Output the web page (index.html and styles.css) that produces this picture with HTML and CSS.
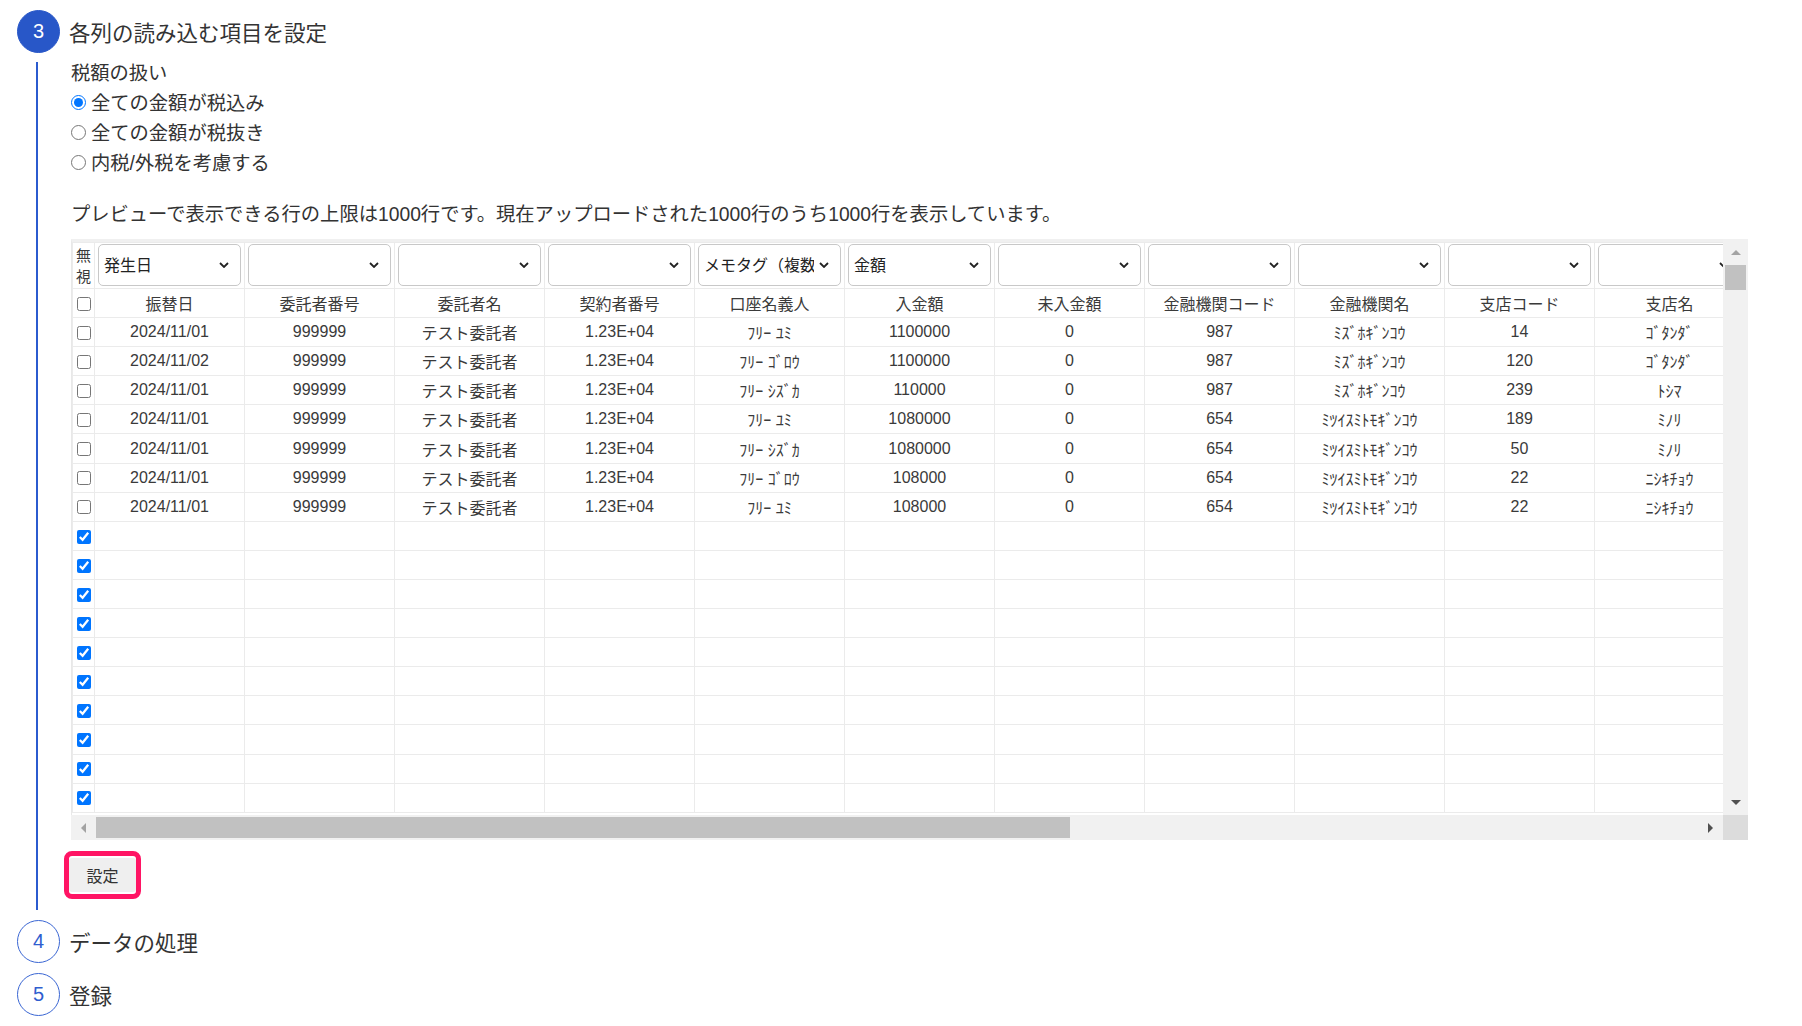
FILE: index.html
```html
<!DOCTYPE html>
<html lang="ja">
<head>
    <meta charset="UTF-8">
    <meta name="viewport" content="width=device-width, initial-scale=1.0">
    <title>取込設定</title>
    <link rel="stylesheet" href="styles.css">
</head>
<body>

    <section class="step is-active">
        <div class="step-head">
            <span class="step-num">3</span>
            <h2 class="step-title">各列の読み込む項目を設定</h2>
        </div>
        <div class="step-body">
            <p class="field-label">税額の扱い</p>
            <div class="radio-list">
                <label class="radio"><input type="radio" name="tax" checked>全ての金額が税込み</label>
                <label class="radio"><input type="radio" name="tax">全ての金額が税抜き</label>
                <label class="radio"><input type="radio" name="tax">内税/外税を考慮する</label>
            </div>

            <p class="preview-note">プレビューで表示できる行の上限は1000行です。現在アップロードされた1000行のうち1000行を表示しています。</p>

            <div class="preview">
                <div class="preview-scroll">
                    <table class="preview-table">
                        <colgroup>
                            <col class="col-check">
                            <col class="col-data"><col class="col-data"><col class="col-data"><col class="col-data">
                            <col class="col-data"><col class="col-data"><col class="col-data"><col class="col-data">
                            <col class="col-data"><col class="col-data"><col class="col-data">
                        </colgroup>
                        <thead>
                            <tr class="select-row">
                                <th class="ignore-head">無視</th>
                                <td><div class="col-select"><select><option>発生日</option></select><svg class="chevron" viewBox="0 0 10 6"><path d="M1 1l4 4 4-4"/></svg></div></td>
                                <td><div class="col-select"><select><option></option></select><svg class="chevron" viewBox="0 0 10 6"><path d="M1 1l4 4 4-4"/></svg></div></td>
                                <td><div class="col-select"><select><option></option></select><svg class="chevron" viewBox="0 0 10 6"><path d="M1 1l4 4 4-4"/></svg></div></td>
                                <td><div class="col-select"><select><option></option></select><svg class="chevron" viewBox="0 0 10 6"><path d="M1 1l4 4 4-4"/></svg></div></td>
                                <td><div class="col-select"><select><option>メモタグ（複数選択可）</option></select><svg class="chevron" viewBox="0 0 10 6"><path d="M1 1l4 4 4-4"/></svg></div></td>
                                <td><div class="col-select"><select><option>金額</option></select><svg class="chevron" viewBox="0 0 10 6"><path d="M1 1l4 4 4-4"/></svg></div></td>
                                <td><div class="col-select"><select><option></option></select><svg class="chevron" viewBox="0 0 10 6"><path d="M1 1l4 4 4-4"/></svg></div></td>
                                <td><div class="col-select"><select><option></option></select><svg class="chevron" viewBox="0 0 10 6"><path d="M1 1l4 4 4-4"/></svg></div></td>
                                <td><div class="col-select"><select><option></option></select><svg class="chevron" viewBox="0 0 10 6"><path d="M1 1l4 4 4-4"/></svg></div></td>
                                <td><div class="col-select"><select><option></option></select><svg class="chevron" viewBox="0 0 10 6"><path d="M1 1l4 4 4-4"/></svg></div></td>
                                <td><div class="col-select"><select><option></option></select><svg class="chevron" viewBox="0 0 10 6"><path d="M1 1l4 4 4-4"/></svg></div></td>
                            </tr>
                            <tr>
                                <th><input type="checkbox"></th>
                                <th>振替日</th><th>委託者番号</th><th>委託者名</th><th>契約者番号</th><th>口座名義人</th><th>入金額</th>
                                <th>未入金額</th><th>金融機関コード</th><th>金融機関名</th><th>支店コード</th><th>支店名</th>
                            </tr>
                        </thead>
                        <tbody>
                            <tr><td><input type="checkbox"></td><td>2024/11/01</td><td>999999</td><td>テスト委託者</td><td>1.23E+04</td><td>ﾌﾘｰ ﾕﾐ</td><td>1100000</td><td>0</td><td>987</td><td>ﾐｽﾞﾎｷﾞﾝｺｳ</td><td>14</td><td>ｺﾞﾀﾝﾀﾞ</td></tr>
                            <tr><td><input type="checkbox"></td><td>2024/11/02</td><td>999999</td><td>テスト委託者</td><td>1.23E+04</td><td>ﾌﾘｰ ｺﾞﾛｳ</td><td>1100000</td><td>0</td><td>987</td><td>ﾐｽﾞﾎｷﾞﾝｺｳ</td><td>120</td><td>ｺﾞﾀﾝﾀﾞ</td></tr>
                            <tr><td><input type="checkbox"></td><td>2024/11/01</td><td>999999</td><td>テスト委託者</td><td>1.23E+04</td><td>ﾌﾘｰ ｼｽﾞｶ</td><td>110000</td><td>0</td><td>987</td><td>ﾐｽﾞﾎｷﾞﾝｺｳ</td><td>239</td><td>ﾄｼﾏ</td></tr>
                            <tr><td><input type="checkbox"></td><td>2024/11/01</td><td>999999</td><td>テスト委託者</td><td>1.23E+04</td><td>ﾌﾘｰ ﾕﾐ</td><td>1080000</td><td>0</td><td>654</td><td>ﾐﾂｲｽﾐﾄﾓｷﾞﾝｺｳ</td><td>189</td><td>ﾐﾉﾘ</td></tr>
                            <tr><td><input type="checkbox"></td><td>2024/11/01</td><td>999999</td><td>テスト委託者</td><td>1.23E+04</td><td>ﾌﾘｰ ｼｽﾞｶ</td><td>1080000</td><td>0</td><td>654</td><td>ﾐﾂｲｽﾐﾄﾓｷﾞﾝｺｳ</td><td>50</td><td>ﾐﾉﾘ</td></tr>
                            <tr><td><input type="checkbox"></td><td>2024/11/01</td><td>999999</td><td>テスト委託者</td><td>1.23E+04</td><td>ﾌﾘｰ ｺﾞﾛｳ</td><td>108000</td><td>0</td><td>654</td><td>ﾐﾂｲｽﾐﾄﾓｷﾞﾝｺｳ</td><td>22</td><td>ﾆｼｷﾁｮｳ</td></tr>
                            <tr><td><input type="checkbox"></td><td>2024/11/01</td><td>999999</td><td>テスト委託者</td><td>1.23E+04</td><td>ﾌﾘｰ ﾕﾐ</td><td>108000</td><td>0</td><td>654</td><td>ﾐﾂｲｽﾐﾄﾓｷﾞﾝｺｳ</td><td>22</td><td>ﾆｼｷﾁｮｳ</td></tr>
                            <tr><td><input type="checkbox" checked></td><td></td><td></td><td></td><td></td><td></td><td></td><td></td><td></td><td></td><td></td><td></td></tr>
                            <tr><td><input type="checkbox" checked></td><td></td><td></td><td></td><td></td><td></td><td></td><td></td><td></td><td></td><td></td><td></td></tr>
                            <tr><td><input type="checkbox" checked></td><td></td><td></td><td></td><td></td><td></td><td></td><td></td><td></td><td></td><td></td><td></td></tr>
                            <tr><td><input type="checkbox" checked></td><td></td><td></td><td></td><td></td><td></td><td></td><td></td><td></td><td></td><td></td><td></td></tr>
                            <tr><td><input type="checkbox" checked></td><td></td><td></td><td></td><td></td><td></td><td></td><td></td><td></td><td></td><td></td><td></td></tr>
                            <tr><td><input type="checkbox" checked></td><td></td><td></td><td></td><td></td><td></td><td></td><td></td><td></td><td></td><td></td><td></td></tr>
                            <tr><td><input type="checkbox" checked></td><td></td><td></td><td></td><td></td><td></td><td></td><td></td><td></td><td></td><td></td><td></td></tr>
                            <tr><td><input type="checkbox" checked></td><td></td><td></td><td></td><td></td><td></td><td></td><td></td><td></td><td></td><td></td><td></td></tr>
                            <tr><td><input type="checkbox" checked></td><td></td><td></td><td></td><td></td><td></td><td></td><td></td><td></td><td></td><td></td><td></td></tr>
                            <tr><td><input type="checkbox" checked></td><td></td><td></td><td></td><td></td><td></td><td></td><td></td><td></td><td></td><td></td><td></td></tr>
                        </tbody>
                    </table>
                </div>

                <div class="vbar">
                    <span class="sb-btn"><svg width="10" height="5" viewBox="0 0 10 5"><polygon points="0,5 5,0 10,5" class="sb-off"/></svg></span>
                    <span class="vthumb"></span>
                    <span class="sb-fill"></span>
                    <span class="sb-btn"><svg width="10" height="5" viewBox="0 0 10 5"><polygon points="0,0 5,5 10,0" class="sb-on"/></svg></span>
                </div>
                <div class="hbar">
                    <span class="sb-btn"><svg width="5" height="10" viewBox="0 0 5 10"><polygon points="5,0 0,5 5,10" class="sb-off"/></svg></span>
                    <span class="hthumb"></span>
                    <span class="sb-fill"></span>
                    <span class="sb-btn"><svg width="5" height="10" viewBox="0 0 5 10"><polygon points="0,0 5,5 0,10" class="sb-on"/></svg></span>
                </div>
                <div class="sb-corner"></div>
            </div>

            <div class="actions">
                <span class="highlight"><button class="btn">設定</button></span>
            </div>
        </div>
    </section>

    <section class="step">
        <div class="step-head">
            <span class="step-num">4</span>
            <h2 class="step-title">データの処理</h2>
        </div>
    </section>

    <section class="step">
        <div class="step-head">
            <span class="step-num">5</span>
            <h2 class="step-title">登録</h2>
        </div>
    </section>

</body>
</html>
```

FILE: styles.css
```css
body {
    margin: 0;
    padding-top: 10px;
    font-family: "Liberation Sans", "Noto Sans CJK JP", sans-serif;
    color: #333;
    background: #fff;
}

/* ステップ見出し */
.step + .step {
    margin-top: 10px;
}

.step-head {
    display: flex;
    align-items: center;
    height: 43px;
}

.step-num {
    box-sizing: border-box;
    width: 43px;
    height: 43px;
    margin-left: 17px;
    border: 1.5px solid #3a66d3;
    border-radius: 50%;
    color: #2f5ecf;
    background: #fff;
    display: flex;
    align-items: center;
    justify-content: center;
    font-size: 20px;
}

.step.is-active .step-num {
    background: #2857c8;
    border-color: #2857c8;
    color: #fff;
}

.step-title {
    margin: 0 0 0 9px;
    font-size: 21.5px;
    font-weight: normal;
    color: #333;
}

.step-body {
    margin: 9px 0 0 36px;
    border-left: 2px solid #2b5bcf;
    padding: 0 0 11px 33px;
}

/* 税額の扱い */
.field-label {
    margin: 0;
    font-size: 19.3px;
    line-height: 24px;
}

.radio-list {
    margin-top: 1px;
}

.radio {
    display: flex;
    align-items: center;
    height: 30px;
    font-size: 19.3px;
}

.radio input {
    width: 15px;
    height: 15px;
    margin: 0 5px 0 0;
}

.preview-note {
    margin: 26px 0 12px;
    font-size: 19.3px;
    line-height: 24px;
}

/* プレビュー表 */
.preview {
    display: grid;
    grid-template-columns: 1652px 25px;
    grid-template-rows: 576px 25px;
}

.preview-scroll {
    overflow: hidden;
    border-top: 3px solid #f0f0f0;
    border-left: 1px solid #e8e8e8;
}

.preview-table {
    border-collapse: collapse;
    table-layout: fixed;
    width: 1672px;
    font-size: 16px;
    color: #3a3a3a;
}

.col-check {
    width: 22px;
}

.col-data {
    width: 150px;
}

.preview-table th,
.preview-table td {
    border: 1px solid #ebebeb;
    padding: 0;
    height: 28.1px;
    text-align: center;
    font-weight: normal;
    white-space: nowrap;
    overflow: hidden;
}

.preview-table .select-row td {
    height: 42px;
    padding: 1px 3px 2px;
}

.preview-table .ignore-head {
    white-space: normal;
    line-height: 21px;
    font-size: 15px;
}

.preview-table input[type="checkbox"] {
    width: 14px;
    height: 14px;
    margin: 0;
    vertical-align: middle;
}

.col-select {
    position: relative;
}

.col-select select {
    box-sizing: border-box;
    width: 100%;
    height: 42px;
    appearance: none;
    border: 1px solid #c8c8c8;
    border-radius: 5px;
    background: #fff;
    padding: 0 26px 0 5px;
    font-family: inherit;
    font-size: 16px;
    color: #222;
}

.chevron {
    position: absolute;
    right: 12px;
    top: 18px;
    width: 10px;
    height: 6px;
    fill: none;
    stroke: #222;
    stroke-width: 1.8;
}

/* スクロールバー */
.vbar,
.hbar {
    background: #f1f1f1;
    display: flex;
    align-items: center;
}

.vbar {
    flex-direction: column;
}

.sb-btn {
    flex: none;
    width: 25px;
    height: 26px;
    display: flex;
    align-items: center;
    justify-content: center;
}

.hbar .sb-btn {
    height: 25px;
}

.sb-fill {
    flex: 1;
}

.vthumb {
    flex: none;
    width: 21px;
    height: 25px;
    background: #c1c1c1;
}

.hthumb {
    flex: none;
    width: 974px;
    height: 21px;
    background: #c1c1c1;
}

.sb-off {
    fill: #a3a3a3;
}

.sb-on {
    fill: #505050;
}

.sb-corner {
    background: #dcdcdc;
}

/* 設定ボタン */
.actions {
    display: flex;
    margin-top: 11px;
}

.highlight {
    margin-left: -7px;
    border: 5px solid #ff1464;
    border-radius: 8px;
    padding: 2px 0;
    display: flex;
}

.btn {
    width: 67px;
    height: 34px;
    border: none;
    border-radius: 3px;
    background: #efefef;
    font-family: inherit;
    font-size: 16px;
    color: #333;
}
```
